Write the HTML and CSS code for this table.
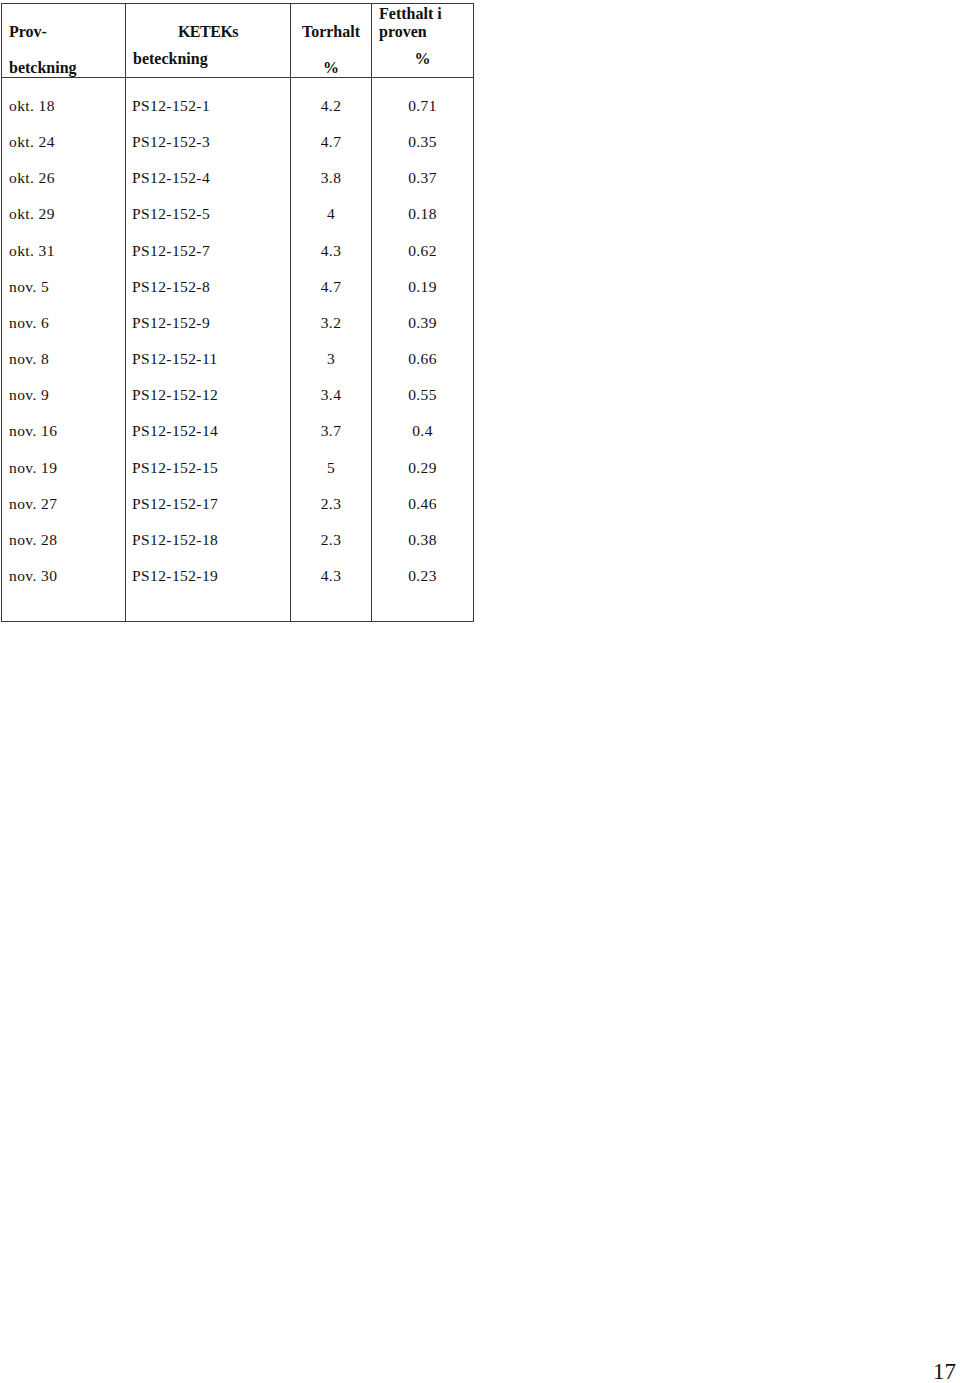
FILE: index.html
```html
<!DOCTYPE html>
<html lang="sv">
<head>
<meta charset="utf-8">
<title>Prover</title>
<link rel="stylesheet" href="styles.css">
</head>
<body>
<table class="data">
  <colgroup>
    <col class="c1"><col class="c2"><col class="c3"><col class="c4">
  </colgroup>
  <thead>
    <tr>
      <th class="h1"><div class="l1">Prov-</div><div class="l2">betckning</div></th>
      <th class="h2"><div class="l1 center keteks">KETEKs</div><div class="l2b">beteckning</div></th>
      <th class="h3"><div class="l1 center">Torrhalt</div><div class="l2 center">%</div></th>
      <th class="h4"><div class="f1">Fetthalt i</div><div>proven</div><div class="f3 center">%</div></th>
    </tr>
  </thead>
  <tbody>
    <tr><td>okt. 18</td><td>PS12-152-1</td><td>4.2</td><td>0.71</td></tr>
    <tr><td>okt. 24</td><td>PS12-152-3</td><td>4.7</td><td>0.35</td></tr>
    <tr><td>okt. 26</td><td>PS12-152-4</td><td>3.8</td><td>0.37</td></tr>
    <tr><td>okt. 29</td><td>PS12-152-5</td><td>4</td><td>0.18</td></tr>
    <tr><td>okt. 31</td><td>PS12-152-7</td><td>4.3</td><td>0.62</td></tr>
    <tr><td>nov. 5</td><td>PS12-152-8</td><td>4.7</td><td>0.19</td></tr>
    <tr><td>nov. 6</td><td>PS12-152-9</td><td>3.2</td><td>0.39</td></tr>
    <tr><td>nov. 8</td><td>PS12-152-11</td><td>3</td><td>0.66</td></tr>
    <tr><td>nov. 9</td><td>PS12-152-12</td><td>3.4</td><td>0.55</td></tr>
    <tr><td>nov. 16</td><td>PS12-152-14</td><td>3.7</td><td>0.4</td></tr>
    <tr><td>nov. 19</td><td>PS12-152-15</td><td>5</td><td>0.29</td></tr>
    <tr><td>nov. 27</td><td>PS12-152-17</td><td>2.3</td><td>0.46</td></tr>
    <tr><td>nov. 28</td><td>PS12-152-18</td><td>2.3</td><td>0.38</td></tr>
    <tr><td>nov. 30</td><td>PS12-152-19</td><td>4.3</td><td>0.23</td></tr>
  </tbody>
</table>
<div class="pagenum">17</div>
</body>
</html>
```
FILE: styles.css
```css
html, body {
  margin: 0;
  padding: 0;
}
body {
  height: 1383px;
  display: flex;
  flex-direction: column;
  background: #fff;
  color: #111;
  font-family: "Liberation Serif", "Times New Roman", serif;
  overflow: hidden;
}
.data {
  border-collapse: collapse;
  table-layout: fixed;
  width: 473px;
  margin: 3px 0 0 1px;
}
.c1 { width: 124px; }
.c2 { width: 165px; }
.c3 { width: 81px; }
.c4 { width: 102px; }
.data th, .data td {
  border-left: 1px solid #3a3a3a;
  border-right: 1px solid #3a3a3a;
}
.data thead th {
  border-top: 1px solid #3a3a3a;
  border-bottom: 1px solid #3a3a3a;
  height: 74px;
  padding: 0 7px;
  vertical-align: top;
  text-align: left;
  font-size: 16px;
  font-weight: bold;
  line-height: 18px;
  box-sizing: border-box;
}
.l1 { margin-top: 19px; }
.l2 { margin-top: 18px; }
.l2b { margin-top: 9px; }
.f1 { margin-top: 1px; }
.f3 { margin-top: 9px; }
.center { text-align: center; }
.keteks { letter-spacing: -0.5px; }
.data td {
  font-size: 15.5px;
  letter-spacing: 0.4px;
  line-height: 36.15px;
  padding: 0 7px;
  white-space: nowrap;
}
.data td:nth-child(2) { padding-left: 6px; }
.data td:nth-child(3),
.data td:nth-child(4) { text-align: center; padding: 0; }
.data tbody tr:first-child td { padding-top: 10px; }
.data tbody tr:last-child td {
  padding-bottom: 27px;
  border-bottom: 1px solid #3a3a3a;
}
.pagenum {
  margin-top: auto;
  align-self: flex-end;
  padding: 0 4px 1px 0;
  font-size: 23px;
  line-height: 20px;
}
```
